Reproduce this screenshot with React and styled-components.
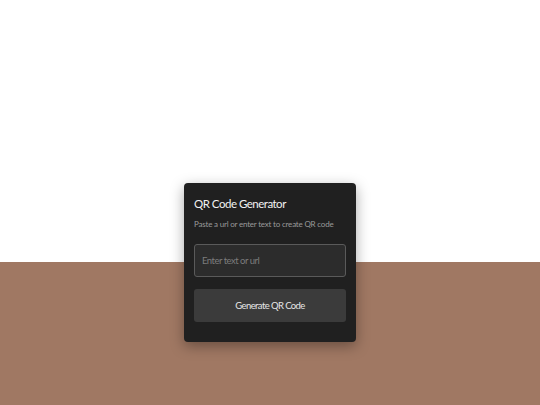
import React, { useState } from 'react';
import styled, { createGlobalStyle } from 'styled-components';

const GlobalStyle = createGlobalStyle`
  html, body {
    margin: 0;
    padding: 0;
  }
  body {
    font-family: Lato, "Open Sans", sans-serif;
    background: linear-gradient(to bottom, #ffffff 0, #ffffff 262px, #a07863 262px, #a07863 100%);
    min-height: 405px;
  }
`;

const Page = styled.div`
  display: flex;
  justify-content: center;
  align-items: flex-start;
  padding-top: 183px;
  min-height: 405px;
  box-sizing: border-box;
`;

const Card = styled.div`
  width: 172px;
  box-sizing: border-box;
  padding: 13px 10px 20px;
  background: #202020;
  border-radius: 4px;
  box-shadow: 0 4px 14px rgba(0, 0, 0, 0.35);
  display: flex;
  flex-direction: column;
`;

const Title = styled.h1`
  margin: 0;
  font-size: 11.5px;
  letter-spacing: -0.5px;
  font-weight: 400;
  color: #f2f2f2;
  line-height: 16px;
`;

const Subtitle = styled.p`
  margin: 6px 0 0;
  font-size: 8px;
  letter-spacing: -0.2px;
  color: #9a9a9a;
  line-height: 12px;
  white-space: nowrap;
`;

const Input = styled.input`
  margin-top: 14px;
  height: 33px;
  box-sizing: border-box;
  padding: 0 7px;
  background: #2c2c2c;
  border: 1px solid #5a5a5a;
  border-radius: 3px;
  color: #ddd;
  font-family: inherit;
  font-size: 9.5px;
  letter-spacing: -0.5px;
  outline: none;

  &::placeholder {
    color: #7c7c7c;
  }
`;

const Button = styled.button`
  margin-top: 12px;
  height: 33px;
  border: none;
  border-radius: 3px;
  background: #3b3b3b;
  color: #e6e6e6;
  font-family: inherit;
  font-size: 9.5px;
  letter-spacing: -0.6px;
  cursor: pointer;
`;

export default function App() {
  const [text, setText] = useState('');
  return (
    <>
      <GlobalStyle />
      <Page>
        <Card>
          <Title>QR Code Generator</Title>
          <Subtitle>Paste a url or enter text to create QR code</Subtitle>
          <Input
            type="text"
            placeholder="Enter text or url"
            value={text}
            onChange={(e) => setText(e.target.value)}
          />
          <Button>Generate QR Code</Button>
        </Card>
      </Page>
    </>
  );
}
